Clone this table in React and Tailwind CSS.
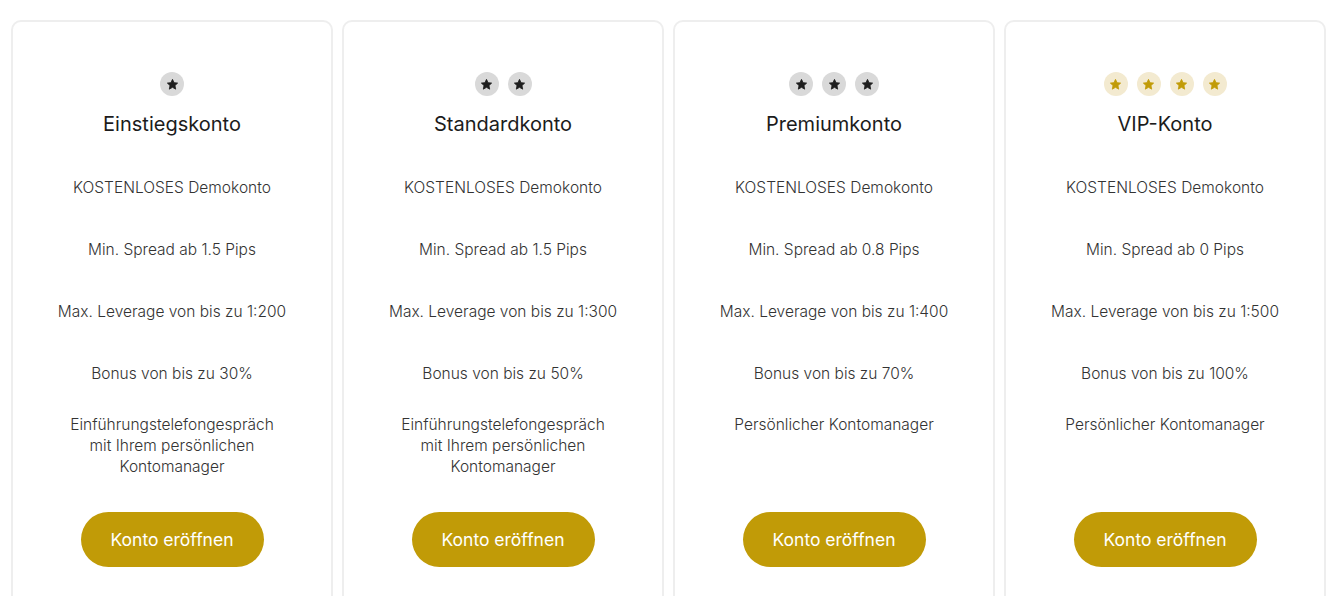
import React from "react";

const plans = [
  { name: "Einstiegskonto", stars: 1, gold: false, spread: "1.5", lev: "1:200", bonus: "30%", last: ["Einführungstelefongespräch", "mit Ihrem persönlichen", "Kontomanager"] },
  { name: "Standardkonto", stars: 2, gold: false, spread: "1.5", lev: "1:300", bonus: "50%", last: ["Einführungstelefongespräch", "mit Ihrem persönlichen", "Kontomanager"] },
  { name: "Premiumkonto", stars: 3, gold: false, spread: "0.8", lev: "1:400", bonus: "70%", last: ["Persönlicher Kontomanager"] },
  { name: "VIP-Konto", stars: 4, gold: true, spread: "0", lev: "1:500", bonus: "100%", last: ["Persönlicher Kontomanager"] },
];

function Star({ gold }) {
  return (
    <div className={`w-6 h-6 rounded-full flex items-center justify-center ${gold ? "bg-[#f3ead0]" : "bg-[#d9d9d9]"}`}>
      <svg width="13" height="13" viewBox="0 0 24 24">
        <path
          d="M12 2.5l2.9 6.1 6.6.8-4.9 4.6 1.3 6.6L12 17.3l-5.9 3.3 1.3-6.6-4.9-4.6 6.6-.8z"
          fill={gold ? "#c19b07" : "#1e1e1e"}
          stroke={gold ? "#c19b07" : "#1e1e1e"}
          strokeWidth="1.5"
          strokeLinejoin="round"
        />
      </svg>
    </div>
  );
}

export default function App() {
  return (
    <div className="w-[1343px] h-[596px] overflow-hidden bg-white" style={{ fontFamily: "Inter, 'Open Sans', sans-serif" }}>
      <div className="flex gap-[9px] pl-[11px] pt-[20px]">
        {plans.map((p) => (
          <div key={p.name} className="w-[322px] shrink-0 border-2 border-[#eeeeee] rounded-[10px] flex flex-col items-center pt-[50px] pb-[40px]">
            <div className="flex gap-[9px]">
              {Array.from({ length: p.stars }).map((_, i) => (
                <Star key={i} gold={p.gold} />
              ))}
            </div>
            <div className="mt-[14px] h-7 leading-7 text-[20px] font-normal text-[#1c1c1c]">{p.name}</div>
            <div className="mt-[39px] flex flex-col items-center text-[15.5px] leading-[21px] text-[#333333] font-light text-center">
              <div>KOSTENLOSES Demokonto</div>
              <div className="mt-[41px]">Min. Spread ab {p.spread} Pips</div>
              <div className="mt-[41px]">Max. Leverage von bis zu {p.lev}</div>
              <div className="mt-[41px]">Bonus von bis zu {p.bonus}</div>
              <div className="mt-[30px] h-[63px]">
                {p.last.map((l) => (
                  <div key={l}>{l}</div>
                ))}
              </div>
            </div>
            <button className="mt-[35px] w-[183px] h-[55px] rounded-full bg-[#c19b07] text-white text-[17.5px] pt-[2px]">
              Konto eröffnen
            </button>
          </div>
        ))}
      </div>
    </div>
  );
}
